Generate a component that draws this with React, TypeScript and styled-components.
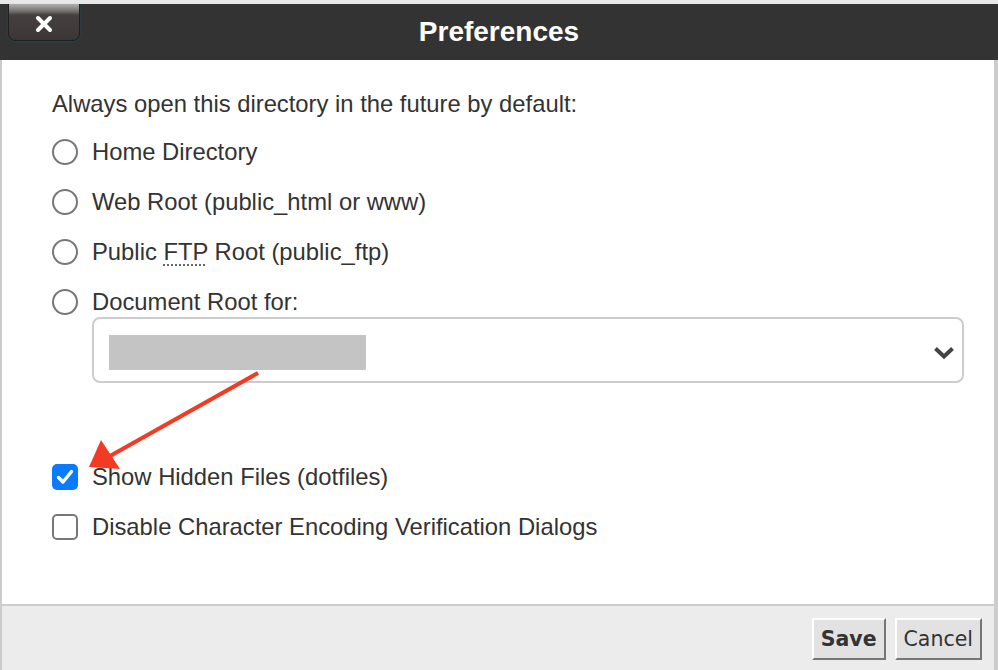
import { createGlobalStyle } from "styled-components";
import styled from "styled-components";

const GlobalStyle = createGlobalStyle`
  html, body {
    margin: 0;
    padding: 0;
    background: #e8e8e8;
  }

  body {
    font-family: "Liberation Sans", Arial, Helvetica, sans-serif;
    color: #333;
  }
`;

const Dialog = styled.div`
  display: flex;
  flex-direction: column;
  width: 998px;
  height: 670px;
  padding-top: 4px;
  box-sizing: border-box;
  background: #e8e8e8;
`;

const Header = styled.div`
  position: relative;
  display: flex;
  align-items: center;
  justify-content: center;
  height: 56px;
  background: #333;
`;

const Title = styled.h1`
  margin: 0;
  font-size: 28px;
  font-weight: bold;
  color: #fff;
`;

const CloseButton = styled.button`
  position: absolute;
  left: 8px;
  top: 0;
  display: flex;
  align-items: center;
  justify-content: center;
  width: 72px;
  height: 37px;
  padding: 3px 0 0;
  border: 1px solid #1f1f1f;
  border-top: none;
  border-radius: 0 0 7px 7px;
  background: linear-gradient(#b0b0b0 0, #767272 7px, #463f3f 11px, #3b3636 100%);
  box-shadow: 0 1px 2px rgba(20, 90, 120, 0.6);
  cursor: pointer;
`;

const Body = styled.div`
  position: relative;
  flex: 1;
  display: flex;
  flex-direction: column;
  padding: 30px 30px 0 50px;
  background: #fff;
  border-left: 2px solid #ccc;
  border-right: 4px solid #ccc;
`;

const Intro = styled.p`
  margin: 0 0 21px;
  font-size: 23.8px;
  line-height: 28px;
`;

const OptionList = styled.div`
  display: flex;
  flex-direction: column;
  gap: 24px;
`;

const Option = styled.label`
  display: flex;
  align-items: center;
  gap: 14px;
  height: 26px;
  font-size: 23.8px;
  line-height: 26px;
  cursor: pointer;
`;

const Radio = styled.input.attrs({ type: "radio" })`
  appearance: none;
  flex: none;
  width: 26px;
  height: 26px;
  margin: 0;
  border: 2px solid #777;
  border-radius: 50%;
  background: #fff;
  box-sizing: border-box;
`;

const Box = styled.span<{ $checked?: boolean }>`
  display: flex;
  flex: none;
  align-items: center;
  justify-content: center;
  width: 26px;
  height: 26px;
  border-radius: 5px;
  box-sizing: border-box;
  background: ${(p) => (p.$checked ? "#0a7aff" : "#fff")};
  border: ${(p) => (p.$checked ? "none" : "2px solid #777")};
`;

const Abbr = styled.abbr`
  text-decoration: underline dotted #666;
  text-decoration-thickness: 2px;
  text-underline-offset: 4px;
`;

const Select = styled.div`
  display: flex;
  align-items: center;
  justify-content: space-between;
  height: 66px;
  margin: 2px 0 0 40px;
  padding: 5px 7px 0 15px;
  box-sizing: border-box;
  border: 2px solid #ccc;
  border-radius: 8px;
  background: #fff;
`;

const Redacted = styled.span`
  width: 257px;
  height: 35px;
  background: #c4c4c4;
`;

const CheckList = styled(OptionList)`
  margin-top: 81px;
`;

const Arrow = styled.svg`
  position: absolute;
  left: 0;
  top: 0;
  pointer-events: none;
`;

const Footer = styled.div`
  display: flex;
  justify-content: flex-end;
  gap: 9px;
  height: 66px;
  padding: 12px 12px 0 0;
  box-sizing: border-box;
  background: #ececec;
  border-top: 2px solid #ccc;
  border-left: 2px solid #ccc;
  border-right: 4px solid #ccc;
`;

const Button = styled.button<{ $primary?: boolean }>`
  height: 42px;
  padding: 0 7px;
  font-family: "DejaVu Sans", Verdana, sans-serif;
  font-size: 20.5px;
  font-weight: ${(p) => (p.$primary ? "bold" : "normal")};
  color: #333;
  background: #e2e2e2;
  border: 2px solid;
  border-color: #fff #767676 #767676 #fff;
  cursor: pointer;
`;

const Check = () => (
  <svg width="18" height="16" viewBox="0 0 18 16">
    <path d="M2.5 8.5 L7 13 L15.5 2.5" fill="none" stroke="#fff" strokeWidth="3.4" strokeLinecap="round" strokeLinejoin="round" />
  </svg>
);

const Chevron = () => (
  <svg width="22" height="14" viewBox="0 0 22 14">
    <path d="M2.5 2.5 L11 10.5 L19.5 2.5" fill="none" stroke="#444" strokeWidth="4" />
  </svg>
);

const radios = ["Home Directory", "Web Root (public_html or www)"];

export default function App() {
  return (
    <>
      <GlobalStyle />
      <Dialog>
        <Header>
          <CloseButton aria-label="Close">
            <svg width="18" height="18" viewBox="0 0 18 18">
              <path d="M3 3 L15 15 M15 3 L3 15" stroke="#fff" strokeWidth="4" strokeLinecap="round" />
            </svg>
          </CloseButton>
          <Title>Preferences</Title>
        </Header>
        <Body>
          <Intro>Always open this directory in the future by default:</Intro>
          <OptionList>
            {radios.map((r) => (
              <Option key={r}>
                <Radio name="dir" />
                {r}
              </Option>
            ))}
            <Option>
              <Radio name="dir" />
              <span>
                Public <Abbr title="File Transfer Protocol">FTP</Abbr> Root (public_ftp)
              </span>
            </Option>
            <Option>
              <Radio name="dir" />
              Document Root for:
            </Option>
          </OptionList>
          <Select>
            <Redacted />
            <Chevron />
          </Select>
          <CheckList>
            <Option>
              <Box $checked>
                <Check />
              </Box>
              Show Hidden Files (dotfiles)
            </Option>
            <Option>
              <Box />
              Disable Character Encoding Verification Dialogs
            </Option>
          </CheckList>
          <Arrow width="300" height="440" viewBox="0 0 300 440">
            <line x1="256" y1="313" x2="108" y2="396" stroke="#f23b22" strokeWidth="4" />
            <polygon points="87,407 99,380 118,409" fill="#f23b22" />
          </Arrow>
        </Body>
        <Footer>
          <Button $primary>Save</Button>
          <Button>Cancel</Button>
        </Footer>
      </Dialog>
    </>
  );
}
